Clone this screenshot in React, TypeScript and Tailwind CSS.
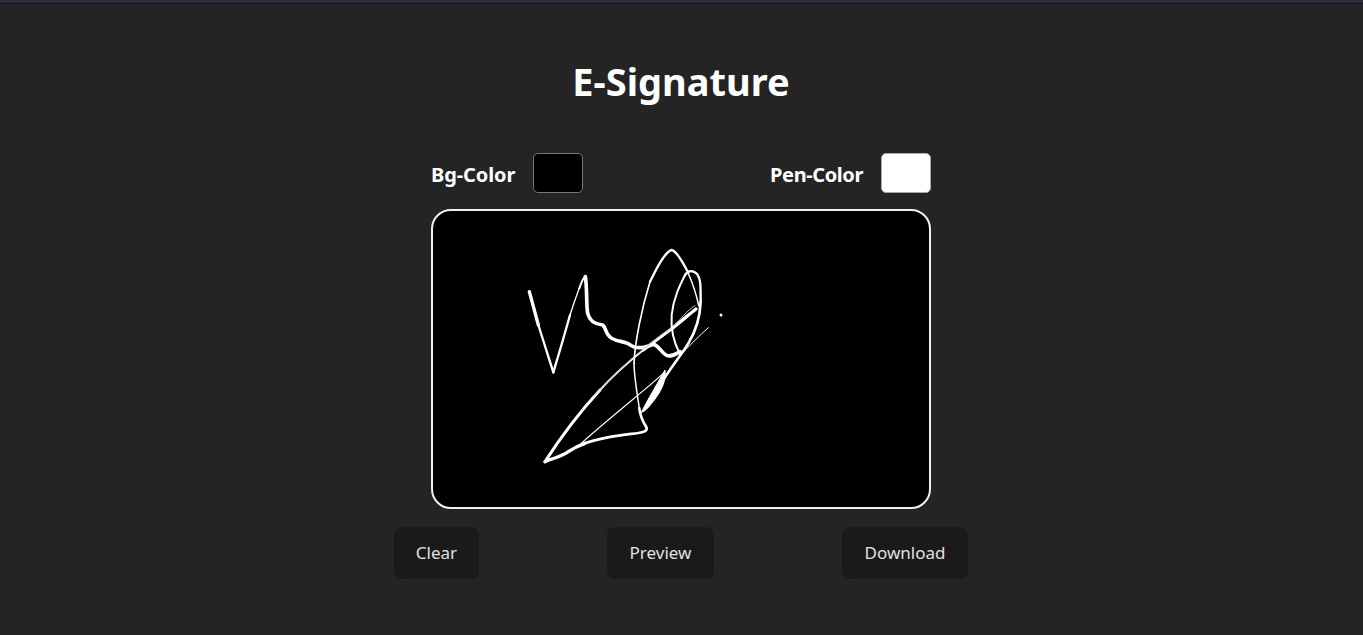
export default function App() {
  return (
    <div className="min-h-[635px] bg-[#242424] font-['Noto_Sans','Open_Sans',sans-serif]">
      <div className="h-[4px] bg-[#2e2c3a] border-b border-[#0f0f12]" />
      <div className="w-[1362px] flex flex-col items-center">
        <h1 className="mt-[52px] h-[50px] text-[38px] leading-[50px] font-bold text-white">E-Signature</h1>

        <div className="mt-[47px] w-[500px] flex justify-between">
          <div className="flex items-center gap-[18px]">
            <span className="mt-[4px] text-[20px] font-bold text-white tracking-[-0.1px]">Bg-Color</span>
            <div className="w-[50px] h-[40px] bg-black rounded-[5px] border border-[#777]" />
          </div>
          <div className="flex items-center gap-[18px]">
            <span className="mt-[4px] text-[20px] font-bold text-white tracking-[-0.4px]">Pen-Color</span>
            <div className="w-[50px] h-[40px] bg-white rounded-[5px] border border-[#aaa]" />
          </div>
        </div>

        <div className="mt-[16px] w-[500px] h-[300px] bg-black border-2 border-[#f0f0f0] rounded-[20px] overflow-hidden">
          <Scribble />
        </div>

        <div className="mt-[18px] w-[574px] flex justify-between">
          <button className="w-[85px] h-[52px] rounded-[8px] bg-[#1a1a1a] text-[17px] text-[#e0e0e0]">Clear</button>
          <button className="w-[107px] h-[52px] rounded-[8px] bg-[#1a1a1a] text-[17px] text-[#e0e0e0]">Preview</button>
          <button className="w-[126px] h-[52px] rounded-[8px] bg-[#1a1a1a] text-[17px] text-[#e0e0e0]">Download</button>
        </div>
      </div>
    </div>
  );
}

// coordinates are in 3x units, traced off the signature
function Scribble() {
  return (
    <svg viewBox="-231 -72 1488 888" className="block w-[496px] h-[296px]" fill="none" stroke="#fff" strokeLinecap="round" strokeLinejoin="round">
      {/* the V */}
      <path d="M58 170 L85 270" strokeWidth="10" />
      <path d="M85 270 L130 412" strokeWidth="7" />
      <path d="M130 412 C150 345 165 295 180 240" strokeWidth="7" />
      <path d="M180 240 C190 210 198 185 208 160" strokeWidth="4" />
      <path d="M208 160 C214 142 220 128 226 125" strokeWidth="6" />
      {/* wavy line */}
      <path d="M226 125 C232 160 228 205 233 235 C240 262 258 268 278 270 C290 280 285 295 300 306 C318 322 340 316 358 328 C375 342 400 340 430 328 C445 330 452 350 468 360 C482 368 495 358 510 350" strokeWidth="11" />
      {/* long sweep */}
      <path d="M105 680 C150 610 210 530 270 465" strokeWidth="9" />
      <path d="M270 465 C310 420 350 385 400 345" strokeWidth="6" />
      <path d="M400 345 C430 322 455 303 480 285 C510 262 535 240 558 222" strokeWidth="10" />
      <path d="M255 480 C320 410 390 345 480 282 C510 258 530 225 555 212" strokeWidth="3" stroke="#bbb" />
      {/* bottom edge and big loop */}
      <path d="M105 680 C130 668 150 668 175 650 C190 640 205 632 225 625" strokeWidth="10" />
      <path d="M225 625 C280 605 340 600 385 594 C400 592 412 588 410 578 C395 555 390 540 388 520" strokeWidth="8" />
      <path d="M388 520 C380 470 372 420 372 385" strokeWidth="4.5" />
      <path d="M372 385 C375 320 395 220 420 140" strokeWidth="5" />
      <path d="M420 140 C440 100 465 50 485 45 C500 48 520 85 532 108" strokeWidth="7" />
      <path d="M532 108 C548 145 560 180 566 212" strokeWidth="4.5" />
      {/* inner loop */}
      <path d="M510 358 C490 320 482 280 485 240 C490 190 510 150 525 120" strokeWidth="6" />
      <path d="M525 120 C535 105 550 105 562 118 C572 132 572 150 572 200" strokeWidth="7" />
      <path d="M572 200 C570 250 560 285 535 325 C510 365 480 400 450 450" strokeWidth="8" />
      {/* spindle */}
      <path d="M394 532 C415 490 440 450 465 405 C470 440 450 475 425 505 C415 518 405 530 394 532 Z" fill="#fff" strokeWidth="3" />
      {/* thin return */}
      <path d="M460 415 C400 470 320 530 210 628" strokeWidth="3.5" />
      <path d="M595 278 C570 300 535 335 510 362" strokeWidth="3" />
      <circle cx="633" cy="240" r="4.5" fill="#fff" stroke="none" />
    </svg>
  );
}
